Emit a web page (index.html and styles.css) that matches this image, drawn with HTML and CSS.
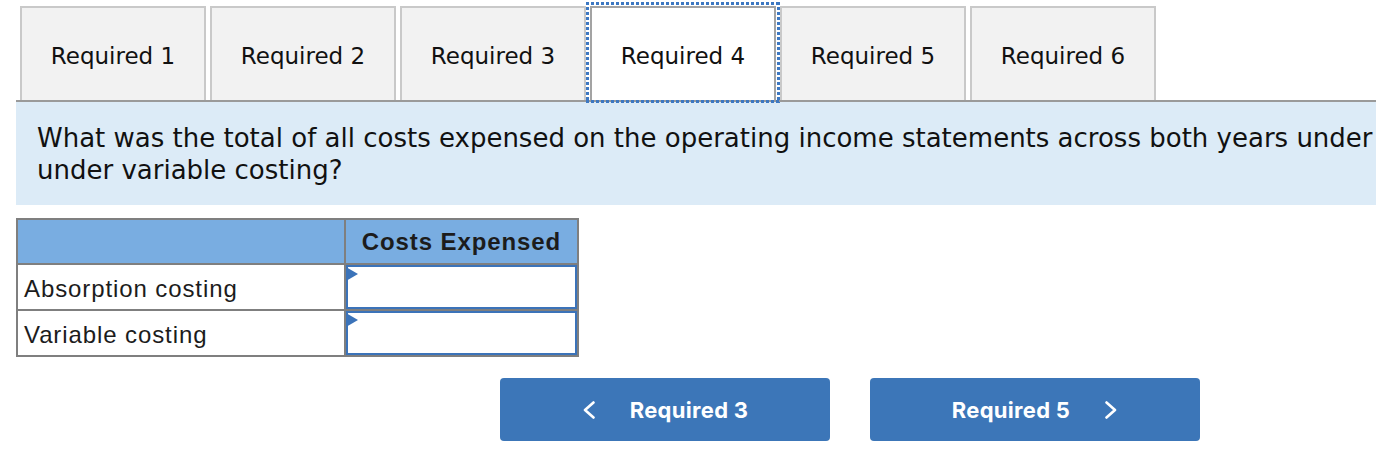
FILE: index.html
```
<!DOCTYPE html>
<html lang="en">
<head>
<meta charset="utf-8">
<title>Required 4</title>
<link rel="stylesheet" href="styles.css">
</head>
<body>
<div class="page">
  <div class="tabs">
    <button class="tab">Required 1</button>
    <button class="tab">Required 2</button>
    <button class="tab">Required 3</button>
    <button class="tab active">Required 4</button>
    <button class="tab">Required 5</button>
    <button class="tab">Required 6</button>
  </div>
  <div class="question">What was the total of all costs expensed on the operating income statements across both years under absorption costing and under variable costing?</div>
  <div class="grid">
    <div class="cell head"></div>
    <div class="cell head title">Costs Expensed</div>
    <div class="cell label">Absorption costing</div>
    <div class="cell entry"></div>
    <div class="cell label">Variable costing</div>
    <div class="cell entry"></div>
  </div>
  <div class="nav">
    <button class="navbtn"><svg class="chev" width="14" height="18" viewBox="0 0 14 18"><polyline points="11.5,1.5 3,9 11.5,16.5" fill="none" stroke="#fff" stroke-width="2.6" stroke-linecap="round" stroke-linejoin="round"/></svg><span>Required 3</span></button>
    <button class="navbtn"><span>Required 5</span><svg class="chev" width="14" height="18" viewBox="0 0 14 18"><polyline points="2.5,1.5 11,9 2.5,16.5" fill="none" stroke="#fff" stroke-width="2.6" stroke-linecap="round" stroke-linejoin="round"/></svg></button>
  </div>
</div>
</body>
</html>
```
FILE: styles.css
```
html, body {
  margin: 0;
  padding: 0;
  background: #fff;
  overflow: hidden;
}

.page {
  width: 1668px;
  margin-left: 16px;
}

.tabs {
  display: flex;
  gap: 4px;
  padding: 6px 0 0 4px;
  border-bottom: 2px solid #9a9a9a;
}

.tab {
  box-sizing: border-box;
  width: 186px;
  margin: 0;
  padding: 32px 0 28px;
  border: 2px solid #c9c9c9;
  border-bottom: none;
  background: #f2f2f2;
  font-family: "DejaVu Sans", Verdana, sans-serif;
  font-size: 23px;
  line-height: 32px;
  color: #111;
  text-align: center;
}

.tab.active {
  position: relative;
  background: #fff;
  border-color: #a3a3a3;
}

.tab.active::after {
  content: "";
  position: absolute;
  top: -6px;
  left: -6px;
  right: -6px;
  bottom: -3px;
  background:
    repeating-linear-gradient(90deg, #3d78c2 0 3px, transparent 3px 5px) top left / 100% 3px no-repeat,
    repeating-linear-gradient(90deg, #3d78c2 0 3px, transparent 3px 5px) bottom left / 100% 3px no-repeat,
    repeating-linear-gradient(180deg, #3d78c2 0 3px, transparent 3px 5px) top left / 3px 100% no-repeat,
    repeating-linear-gradient(180deg, #3d78c2 0 3px, transparent 3px 5px) top right / 3px 100% no-repeat;
}

.question {
  margin-right: -60px;
  background: #dcebf7;
  padding: 20px 21px 19px 21px;
  font-family: "DejaVu Sans", Verdana, sans-serif;
  font-size: 26px;
  line-height: 32px;
  color: #111;
}

.grid {
  display: grid;
  width: max-content;
  grid-template-columns: 326px 231px;
  grid-template-rows: 43px 44px 44px;
  gap: 2px;
  margin-top: 13px;
  border: 2px solid #7f7f7f;
  background: #7f7f7f;
}

.cell {
  background: #fff;
  font-family: "Liberation Sans", Arial, sans-serif;
  font-size: 24px;
  letter-spacing: 0.9px;
  color: #1c1c1c;
}

.head {
  background: #79ade1;
}

.title {
  display: flex;
  align-items: center;
  justify-content: center;
  font-weight: bold;
  padding-top: 1px;
}

.label {
  display: flex;
  align-items: center;
  padding: 4px 0 0 6px;
}

.entry {
  position: relative;
  box-sizing: border-box;
  border: 2px solid #3b73b9;
}

.entry::before {
  content: "";
  position: absolute;
  left: -2px;
  top: 0;
  border-left: 12px solid #3b73b9;
  border-top: 7.5px solid transparent;
  border-bottom: 7.5px solid transparent;
}

.nav {
  display: flex;
  justify-content: center;
  gap: 40px;
  margin-top: 21px;
}

.navbtn {
  display: flex;
  align-items: center;
  justify-content: center;
  gap: 34px;
  width: 330px;
  height: 63px;
  margin: 0;
  padding: 0;
  border: none;
  border-radius: 4px;
  background: #3c76b8;
  color: #fff;
  font-family: Inter, Roboto, sans-serif;
  font-weight: 700;
  font-size: 22px;
  letter-spacing: 0.3px;
}

.chev {
  display: block;
}
```
